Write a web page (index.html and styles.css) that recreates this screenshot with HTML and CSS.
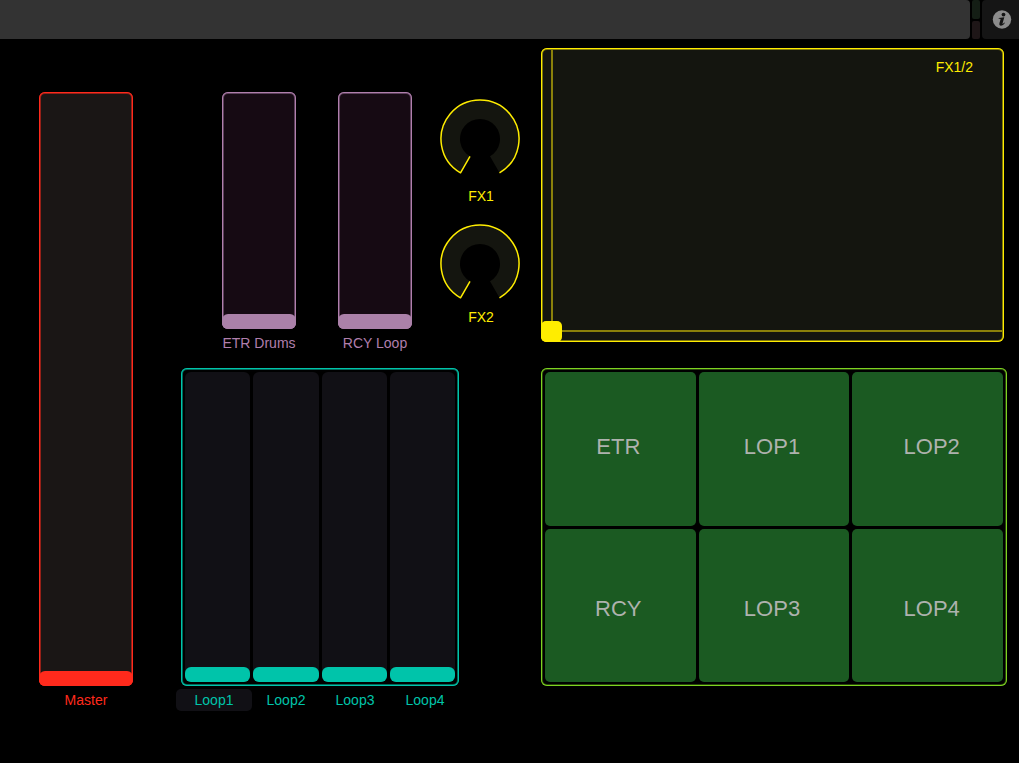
FILE: index.html
```html
<!DOCTYPE html>
<html lang="en">
<head>
<meta charset="utf-8">
<meta name="viewport" content="width=device-width, initial-scale=1">
<title>Control surface</title>
<link rel="stylesheet" href="styles.css">
</head>
<body>
<header class="topbar">
  <div class="page-tab"></div>
  <div class="leds"><span class="led led-in"></span><span class="led led-out"></span></div>
  <button class="info" type="button" aria-label="Info">
    <svg viewBox="0 0 20 20" width="20" height="20" aria-hidden="true">
      <circle cx="10" cy="9.500" r="9.200" fill="#8c8c8c"/>
      <circle cx="11.500" cy="4.600" r="1.900" fill="#151515"/>
      <path d="M6.800 7.900 L12.300 7.200 L10.600 13.200 Q10.400 14.200 11 13.800 L12.300 12.500 L12.900 13 Q11 15.900 8.700 15.700 Q6.800 15.500 7.400 13.300 L8.500 9.400 Q8.700 8.700 7.900 8.700 L6.600 8.700 Z" fill="#151515"/>
    </svg>
  </button>
</header>

<main class="surface">
  <section class="master strip red">
    <input class="fader framed" id="master" type="range" min="0" max="100" value="0">
    <label class="caption" for="master">Master</label>
  </section>

  <section class="mixer">
    <div class="strip purple">
      <input class="fader framed" id="etr-drums" type="range" min="0" max="100" value="0">
      <label class="caption" for="etr-drums">ETR Drums</label>
    </div>
    <div class="strip purple">
      <input class="fader framed" id="rcy-loop" type="range" min="0" max="100" value="0">
      <label class="caption" for="rcy-loop">RCY Loop</label>
    </div>
    <div class="knobs yellow">
      <div class="knob">
        <svg class="dial" viewBox="0 0 80 80" aria-hidden="true">
          <path class="dial-face" d="M30 57.300 L20.500 73.800 A39 39 0 1 1 59.500 73.800 L50 57.300 A20 20 0 1 0 30 57.300 Z"/>
          <path class="dial-line" d="M30 57.300 L20.500 73.800 A39 39 0 1 1 59.500 73.800"/>
        </svg>
        <input class="ghost" id="fx1" type="range" min="0" max="100" value="0">
        <label class="caption" for="fx1">FX1</label>
      </div>
      <div class="knob">
        <svg class="dial" viewBox="0 0 80 80" aria-hidden="true">
          <path class="dial-face" d="M30 57.300 L20.500 73.800 A39 39 0 1 1 59.500 73.800 L50 57.300 A20 20 0 1 0 30 57.300 Z"/>
          <path class="dial-line" d="M30 57.300 L20.500 73.800 A39 39 0 1 1 59.500 73.800"/>
        </svg>
        <input class="ghost" id="fx2" type="range" min="0" max="100" value="0">
        <label class="caption" for="fx2">FX2</label>
      </div>
    </div>
  </section>

  <section class="xy framed yellow">
    <span class="xy-line-v"></span>
    <span class="xy-line-h"></span>
    <input class="ghost" id="fx12" type="range" min="0" max="100" value="0">
    <span class="xy-handle"></span>
    <label class="xy-caption" for="fx12">FX1/2</label>
  </section>

  <section class="loops teal">
    <div class="loop-faders framed">
      <input class="fader" id="loop1" type="range" min="0" max="100" value="0">
      <input class="fader" id="loop2" type="range" min="0" max="100" value="0">
      <input class="fader" id="loop3" type="range" min="0" max="100" value="0">
      <input class="fader" id="loop4" type="range" min="0" max="100" value="0">
    </div>
    <div class="loop-captions">
      <label class="caption tagged" for="loop1">Loop1</label>
      <label class="caption" for="loop2">Loop2</label>
      <label class="caption" for="loop3">Loop3</label>
      <label class="caption" for="loop4">Loop4</label>
    </div>
  </section>

  <section class="pads framed green">
    <button class="pad" type="button">ETR</button>
    <button class="pad" type="button">LOP1</button>
    <button class="pad" type="button">LOP2</button>
    <button class="pad" type="button">RCY</button>
    <button class="pad" type="button">LOP3</button>
    <button class="pad" type="button">LOP4</button>
  </section>
</main>
</body>
</html>
```
FILE: styles.css
```css
* { box-sizing: border-box; }

body {
  margin: 0;
  min-height: 100vh;
  display: flex;
  flex-direction: column;
  background: #000;
  font: 14px/22px "Liberation Sans", Arial, sans-serif;
}

/* Colour themes */
.red { --line: #ff2a1c; --dim: #ff2a1c88; --face: #1a1615; --thumb: #ff2a1c; }
.purple { --line: #b07fad; --dim: #b07fad77; --face: #160a13; --thumb: #ab81a9; }
.yellow { --line: #ffed00; --dim: #ffed0077; --face: #14150f; --thumb: #ffed00; }
.teal { --line: #00c4aa; --dim: #00c4aa88; --face: #111015; --thumb: #00c4aa; }
.green { --line: #7dd321; --dim: #7dd32155; --face: #1b5a22; }

.framed {
  border-radius: 6px;
  box-shadow: inset 0 0 0 1px var(--line), inset 0 0 0 2px var(--dim);
}

/* Top bar */
.topbar { display: flex; gap: 2px; height: 39px; }
.page-tab { flex: 1; background: #333; border-radius: 0 4px 4px 0; }
.leds { width: 8px; display: flex; flex-direction: column; gap: 2px; }
.led { flex: 1; border-radius: 2px; }
.led-in { background: #141e15; }
.led-out { background: #1e1617; }
.info {
  width: 37px;
  padding: 0 0 0 2px;
  border: 0;
  border-radius: 4px 0 0 4px;
  background: #151515;
  display: flex;
  align-items: center;
  justify-content: center;
}

/* Surface */
.surface {
  flex: 1;
  display: grid;
  grid-template-columns: 94fr 366fr 466fr;
  grid-template-rows: minmax(0, 306fr) minmax(0, 343fr);
  gap: 14px 21px;
  padding: 9px 12px 52px 39px;
}

.strip { display: flex; flex-direction: column; min-width: 0; }
.master { grid-row: 1 / 3; padding-top: 44px; }

.caption {
  display: block;
  margin-top: 3px;
  height: 22px;
  color: var(--line);
  text-align: center;
  white-space: nowrap;
}

.fader {
  appearance: none;
  writing-mode: vertical-lr;
  direction: rtl;
  flex: 1;
  width: 100%;
  min-width: 0;
  min-height: 0;
  margin: 0;
  background: var(--face);
  border-radius: 6px;
}
.fader::-webkit-slider-runnable-track { width: 100%; height: 100%; }
.fader::-webkit-slider-thumb {
  appearance: none;
  width: 100%;
  height: 15px;
  border-radius: 6px;
  background: var(--thumb);
}

.mixer {
  display: grid;
  grid-template-columns: 74fr 42fr 74fr 28fr 80fr;
  padding: 44px 0 0 68px;
}
.mixer .strip:nth-child(2) { grid-column: 3; }
.knobs {
  grid-column: 5;
  display: flex;
  flex-direction: column;
  gap: 17px;
  padding-top: 7px;
}
.knob { position: relative; }
.knob .caption { margin-top: 2px; padding-left: 2px; }
.knob:first-child .caption { margin-top: 6px; }
.dial { display: block; width: 100%; }
.dial-face { fill: var(--face); }
.dial-line { fill: none; stroke: var(--line); stroke-width: 1.500; stroke-linejoin: round; }

/* Invisible range input laid over a drawn control */
.ghost {
  position: absolute;
  inset: 0;
  width: 100%;
  height: 100%;
  margin: 0;
  opacity: 0;
}

/* XY pad */
.xy { position: relative; margin: 0 3px 12px 0; background: var(--face); }
.xy-line-v, .xy-line-h { position: absolute; background: #8a800a; }
.xy-line-v { left: 10px; top: 2px; bottom: 2px; width: 2px; }
.xy-line-h { left: 2px; right: 2px; bottom: 10px; height: 2px; }
.xy-handle {
  position: absolute;
  left: 0;
  bottom: 0;
  width: 21px;
  height: 21px;
  border-radius: 5px;
  background: var(--thumb);
}
.xy-caption { position: absolute; top: 8px; right: 31px; color: var(--line); }

/* Loop faders */
.loops { display: flex; flex-direction: column; padding: 0 61px 0 27px; }
.loop-faders {
  flex: 1;
  display: grid;
  grid-template-columns: repeat(4, minmax(0, 1fr));
  grid-template-rows: minmax(0, 1fr);
  gap: 3px;
  padding: 4px;
}
.loop-faders .fader { height: 100%; }
.loop-captions {
  display: grid;
  grid-template-columns: 76fr 68fr 70fr 70fr;
  margin: 0 -1px 0 -5px;
}
.tagged { background: #111015; border-radius: 5px; }

/* Trigger pads */
.pads {
  display: grid;
  grid-template-columns: repeat(3, minmax(0, 1fr));
  grid-template-rows: repeat(2, minmax(0, 1fr));
  gap: 3px;
  padding: 4px;
  margin-bottom: 25px;
}
.pad {
  border: 0;
  border-radius: 5px;
  padding: 0 4px 4px 0;
  background: var(--face);
  color: #aeb2ae;
  font: 22px/26px "Liberation Sans", Arial, sans-serif;
}
.pad:nth-child(3n) { padding-right: 0; padding-left: 8px; }
.pad:nth-child(n + 4) { padding-top: 8px; padding-bottom: 0; }
```
